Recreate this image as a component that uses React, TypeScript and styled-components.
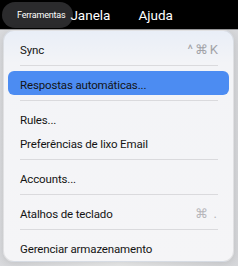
import React from "react";
import styled, { createGlobalStyle } from "styled-components";

const GlobalStyle = createGlobalStyle`
  html, body {
    margin: 0;
    padding: 0;
    background: #e4e4e6;
  }
  * {
    box-sizing: border-box;
  }
`;

type Item =
  | { kind: "item"; label: string; shortcut?: string; faint?: boolean; active?: boolean }
  | { kind: "sep" };

const items: Item[] = [
  { kind: "item", label: "Sync", shortcut: "^⌘K" },
  { kind: "sep" },
  { kind: "item", label: "Respostas automáticas...", active: true },
  { kind: "sep" },
  { kind: "item", label: "Rules..." },
  { kind: "item", label: "Preferências de lixo Email" },
  { kind: "sep" },
  { kind: "item", label: "Accounts..." },
  { kind: "sep" },
  { kind: "item", label: "Atalhos de teclado", shortcut: "⌘ .", faint: true },
  { kind: "sep" },
  { kind: "item", label: "Gerenciar armazenamento" },
];

export default function App() {
  return (
    <>
      <GlobalStyle />
      <Screen>
        <MenuBar>
          <MenuTitle $open>Ferramentas</MenuTitle>
          <MenuLabel>Janela</MenuLabel>
          <MenuLabel $gap={28}>Ajuda</MenuLabel>
        </MenuBar>
        <Dropdown>
          {items.map((it, i) =>
            it.kind === "sep" ? (
              <Separator key={i} />
            ) : (
              <Row key={i} $active={it.active}>
                <Label>{it.label}</Label>
                {it.shortcut && <Shortcut $faint={it.faint}>{it.shortcut}</Shortcut>}
              </Row>
            )
          )}
        </Dropdown>
      </Screen>
    </>
  );
}

const Screen = styled.div`
  width: 238px;
  height: 266px;
  overflow: hidden;
  display: flex;
  flex-direction: column;
  font-family: Roboto, "Liberation Sans", sans-serif;
  background: linear-gradient(90deg, #d9dadd 0%, #eceded 50%, #d6d7da 100%);
`;

const MenuBar = styled.div`
  height: 30px;
  flex-shrink: 0;
  background: #000;
  border-bottom: 1px solid #9a9a9c;
  display: flex;
  align-items: center;
  padding-left: 2px;
`;

const MenuTitle = styled.div<{ $open?: boolean }>`
  height: 26px;
  display: flex;
  align-items: center;
  padding: 0 8px 0 15px;
  border-radius: 13px;
  background: ${(p) => (p.$open ? "#2b2b2d" : "transparent")};
  color: #fff;
  font-size: 9px;
  letter-spacing: -0.2px;
`;

const MenuLabel = styled.div<{ $gap?: number }>`
  margin-left: ${(p) => (p.$gap !== undefined ? p.$gap : -3)}px;
  color: #fff;
  font-size: 13.5px;
`;

const Dropdown = styled.div`
  margin: 0 4px 0 3px;
  height: 232px;
  border-radius: 11px;
  border: 1px solid rgba(0, 0, 0, 0.08);
  background: linear-gradient(180deg, #e9eef7 0%, #f3f4f7 14%, #f5f5f7 100%);
  box-shadow: 0 2px 8px rgba(0, 0, 0, 0.12);
  padding: 5px 4px 3px 4px;
  display: flex;
  flex-direction: column;
`;

const Row = styled.div<{ $active?: boolean }>`
  height: 24px;
  flex-shrink: 0;
  display: flex;
  align-items: center;
  justify-content: space-between;
  padding: 3px 9px 0 12px;
  border-radius: 6px;
  background: ${(p) => (p.$active ? "#4c8cf2" : "transparent")};
  color: #141414;
`;

const Label = styled.span`
  font-size: 11.5px;
  letter-spacing: -0.15px;
  white-space: nowrap;
`;

const Shortcut = styled.span<{ $faint?: boolean }>`
  font-size: 13px;
  letter-spacing: ${(p) => (p.$faint ? 1 : 2)}px;
  margin-right: ${(p) => (p.$faint ? 2 : 0)}px;
  color: ${(p) => (p.$faint ? "#b6b6ba" : "#a2a3a7")};
`;

const Separator = styled.div`
  flex-shrink: 0;
  height: 1px;
  margin: 5px 11px 5px 12px;
  background: #dadadd;
`;
